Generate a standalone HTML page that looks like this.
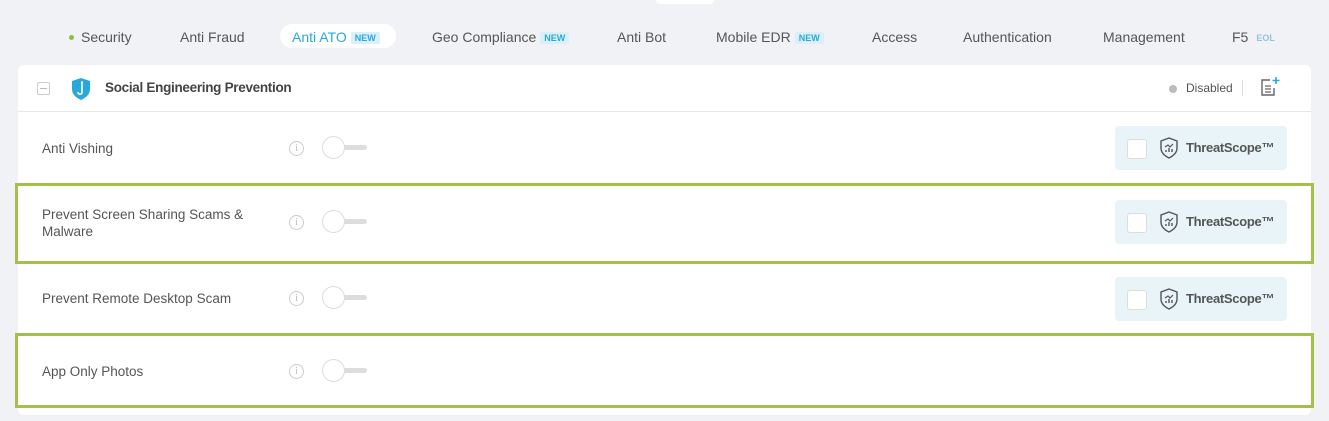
<!DOCTYPE html>
<html><head><style>
body{margin:0;width:1329px;height:421px;background:#f0f2f5;font-family:"Liberation Sans",sans-serif;position:relative;overflow:hidden;color:#555}
.t{position:absolute;top:28px;font-size:14px;color:#555;height:18px;line-height:18px}
.new{font-size:9px;font-weight:bold;color:#2aa8d8;background:#d9f0f8;padding:1px 4px;margin-left:4px;vertical-align:1px;border-radius:2px}
.card{position:absolute;left:18px;top:65px;width:1293px;height:350px;background:#fff;border-radius:6px}
.hl{position:absolute;left:18px;top:111px;width:1293px;height:1px;background:#e6e6e6}
.lbl{position:absolute;left:42px;font-size:13.5px;color:#555;line-height:17px}
.info{position:absolute;left:289px;width:13px;height:13px;border:1px solid #ccc;border-radius:50%;color:#bbb;font-size:10px;text-align:center;line-height:13px;font-family:"Liberation Serif",serif}
.tg{position:absolute;left:322px;width:46px;height:24px}
.tg .bar{position:absolute;left:18px;top:9px;width:27px;height:5px;background:#ddd;border-radius:3px}
.tg .k{position:absolute;left:0;top:0;width:21px;height:21px;border:1.5px solid #ddd;border-radius:50%;background:#fff}
.ts{position:absolute;left:1115px;width:172px;height:44px;background:#e8f4f8;border-radius:4px}
.ts .cb{position:absolute;left:12px;top:13px;width:18px;height:18px;background:#fff;border:1px solid #ddd;border-radius:3px}
.ts .tx{position:absolute;left:71px;top:14px;font-size:13px;font-weight:bold;color:#555;letter-spacing:-0.3px}
.ts svg{position:absolute;left:44px;top:11px}
.gb{position:absolute;left:15px;width:1293px;border:3px solid #a3c14a}
</style></head><body>
<div style="position:absolute;left:655px;top:-10px;width:60px;height:14px;background:#fff;border-radius:6px"></div>
<div style="position:absolute;left:69px;top:35px;width:5px;height:5px;border-radius:50%;background:#8cc03c"></div>
<div class="t" style="left:81px">Security</div>
<div class="t" style="left:180px">Anti Fraud</div>
<div style="position:absolute;left:280px;top:24px;width:116px;height:24px;background:#fff;border-radius:12px"></div>
<div class="t" style="left:292px;color:#2aa8d8">Anti ATO<span class="new">NEW</span></div>
<div class="t" style="left:432px">Geo Compliance<span class="new">NEW</span></div>
<div class="t" style="left:617px">Anti Bot</div>
<div class="t" style="left:716px">Mobile EDR<span class="new">NEW</span></div>
<div class="t" style="left:872px">Access</div>
<div class="t" style="left:963px">Authentication</div>
<div class="t" style="left:1103px">Management</div>
<div class="t" style="left:1232px">F5<span class="new" style="background:none;color:#8cc8dd">EOL</span></div>

<div class="card"></div>
<div style="position:absolute;left:37px;top:82px;width:11px;height:11px;border:1px solid #ccc;border-radius:2px"></div>
<div style="position:absolute;left:40px;top:88px;width:7px;height:1px;background:#bbb"></div>
<svg style="position:absolute;left:71px;top:77px" width="20" height="24" viewBox="0 0 20 24"><path d="M10 1 L19 4 V12 C19 18 14 21 10 23 C6 21 1 18 1 12 V4 Z" fill="#2aa8d8"/><path d="M11 6 V15 C11 18 7 18 7 15" stroke="#fff" stroke-width="1.6" fill="none"/><circle cx="11" cy="5.5" r="1.2" fill="#fff"/></svg>
<div style="position:absolute;left:105px;top:80px;font-size:13.5px;font-weight:bold;color:#444;letter-spacing:-0.3px">Social Engineering Prevention</div>
<div style="position:absolute;left:1169px;top:85px;width:8px;height:8px;border-radius:50%;background:#bbb"></div>
<div style="position:absolute;left:1186px;top:81px;font-size:12px;color:#555">Disabled</div>
<div style="position:absolute;left:1242px;top:80px;width:1px;height:16px;background:#ddd"></div>
<svg style="position:absolute;left:1259px;top:76px" width="22" height="22" viewBox="0 0 22 22"><path d="M11 4 H3 V19 H15 V12" stroke="#666" stroke-width="1.4" fill="none"/><path d="M6 10H12M6 13H12M6 16H12" stroke="#666" stroke-width="1.3"/><path d="M17 1V8M13.5 4.5H20.5" stroke="#2aa8d8" stroke-width="1.6"/></svg>
<div class="hl"></div>

<div class="lbl" style="top:140px">Anti Vishing</div>
<div class="info" style="top:141px">i</div>
<div class="tg" style="top:136px"><div class="bar"></div><div class="k"></div></div>
<div class="ts" style="top:126px"><div class="cb"></div><svg width="20" height="22" viewBox="0 0 20 22"><path d="M10 1 L18 4 V11 C18 16 14 19 10 21 C6 19 2 16 2 11 V4 Z" fill="none" stroke="#555" stroke-width="1.4"/><path d="M6 10 L9 8 L11 10 L14 7" stroke="#555" stroke-width="1.2" fill="none"/><path d="M7 15V13M10 15V11M13 15V12" stroke="#555" stroke-width="1.4"/></svg><div class="tx">ThreatScope™</div></div>

<div class="gb" style="top:183px;height:75px"></div>
<div class="lbl" style="top:206px">Prevent Screen Sharing Scams &amp;<br>Malware</div>
<div class="info" style="top:215px">i</div>
<div class="tg" style="top:210px"><div class="bar"></div><div class="k"></div></div>
<div class="ts" style="top:200px"><div class="cb"></div><svg width="20" height="22" viewBox="0 0 20 22"><path d="M10 1 L18 4 V11 C18 16 14 19 10 21 C6 19 2 16 2 11 V4 Z" fill="none" stroke="#555" stroke-width="1.4"/><path d="M6 10 L9 8 L11 10 L14 7" stroke="#555" stroke-width="1.2" fill="none"/><path d="M7 15V13M10 15V11M13 15V12" stroke="#555" stroke-width="1.4"/></svg><div class="tx">ThreatScope™</div></div>

<div class="lbl" style="top:290px">Prevent Remote Desktop Scam</div>
<div class="info" style="top:291px">i</div>
<div class="tg" style="top:286px"><div class="bar"></div><div class="k"></div></div>
<div class="ts" style="top:277px"><div class="cb"></div><svg width="20" height="22" viewBox="0 0 20 22"><path d="M10 1 L18 4 V11 C18 16 14 19 10 21 C6 19 2 16 2 11 V4 Z" fill="none" stroke="#555" stroke-width="1.4"/><path d="M6 10 L9 8 L11 10 L14 7" stroke="#555" stroke-width="1.2" fill="none"/><path d="M7 15V13M10 15V11M13 15V12" stroke="#555" stroke-width="1.4"/></svg><div class="tx">ThreatScope™</div></div>

<div class="gb" style="top:333px;height:69px"></div>
<div class="lbl" style="top:363px">App Only Photos</div>
<div class="info" style="top:364px">i</div>
<div class="tg" style="top:359px"><div class="bar"></div><div class="k"></div></div>
</body></html>
